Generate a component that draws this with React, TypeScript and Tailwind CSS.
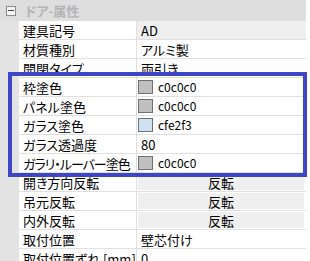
import React from "react";

const FONT = {
  fontFamily: '"Noto Sans CJK JP", "Noto Sans", sans-serif',
  fontFeatureSettings: '"palt"',
};

type Row =
  | { label: string; kind: "text"; value: string; gray?: boolean; tight?: boolean }
  | { label: string; kind: "color"; value: string; color: string; tight?: boolean }
  | { label: string; kind: "button"; value: string; tight?: boolean };

const rows: Row[] = [
  { label: "建具記号", kind: "text", value: "AD", gray: true },
  { label: "材質種別", kind: "text", value: "アルミ製" },
  { label: "開閉タイプ", kind: "text", value: "両引き" },
  { label: "枠塗色", kind: "color", value: "c0c0c0", color: "#c0c0c0" },
  { label: "パネル塗色", kind: "color", value: "c0c0c0", color: "#c0c0c0" },
  { label: "ガラス塗色", kind: "color", value: "cfe2f3", color: "#cfe2f3" },
  { label: "ガラス透過度", kind: "text", value: "80" },
  { label: "ガラリ・ルーバー塗色", kind: "color", value: "c0c0c0", color: "#c0c0c0", tight: true },
  { label: "開き方向反転", kind: "button", value: "反転" },
  { label: "吊元反転", kind: "button", value: "反転" },
  { label: "内外反転", kind: "button", value: "反転" },
  { label: "取付位置", kind: "text", value: "壁芯付け" },
  { label: "取付位置ずれ [mm]", kind: "text", value: "0" },
];

function Value({ row }: { row: Row }) {
  if (row.kind === "color") {
    return (
      <div className="flex h-full items-center pl-[1px]">
        <div
          className="h-[14px] w-[15px] shrink-0 border border-[#707070]"
          style={{ backgroundColor: row.color }}
        />
        <span className="ml-[5px] text-[12px] leading-none text-black">{row.value}</span>
      </div>
    );
  }
  if (row.kind === "button") {
    return (
      <div className="flex h-full items-stretch py-[1px] pl-[1px] pr-[2px]">
        <div className="flex flex-1 items-center justify-center bg-[#efefef] text-[13px] leading-none text-black">
          {row.value}
        </div>
      </div>
    );
  }
  return (
    <div
      className={`flex h-full items-center pl-[4px] text-[13px] leading-none text-black ${
        row.gray ? "bg-[#efefef]" : ""
      }`}
    >
      {row.value}
    </div>
  );
}

export default function App() {
  return (
    <div className="relative h-[261px] w-[310px] overflow-hidden bg-white" style={FONT}>
      <div className="w-[306px]">
        <div className="flex h-[21px] items-center bg-[#dedede]">
          <div className="ml-[6px] flex h-[10px] w-[10px] items-center justify-center border border-[#8a8a8a] bg-[#f4f4f4]">
            <div className="h-[1px] w-[6px] bg-[#404040]" />
          </div>
          <span className="ml-[9px] text-[13px] font-bold leading-none text-[#b4b4b4]">ドア-属性</span>
        </div>
        {rows.map((r, i) => (
          <div key={i} className="flex h-[19px]">
            <div className="w-[19px] shrink-0 bg-[#e3e3e3]" />
            <div
              className={`flex w-[118px] shrink-0 items-center overflow-hidden border-r border-b border-[#e0e0e0] pl-[4px] text-[13px] leading-none whitespace-nowrap text-black ${
                r.tight ? "tracking-[-1px]" : ""
              }`}
            >
              {r.label}
            </div>
            <div className="min-w-0 flex-1 border-b border-[#e0e0e0]">
              <Value row={r} />
            </div>
          </div>
        ))}
      </div>
      <div className="absolute left-[8px] top-[72px] h-[105px] w-[299px] border-[4px] border-[#3c46c6]" />
    </div>
  );
}
